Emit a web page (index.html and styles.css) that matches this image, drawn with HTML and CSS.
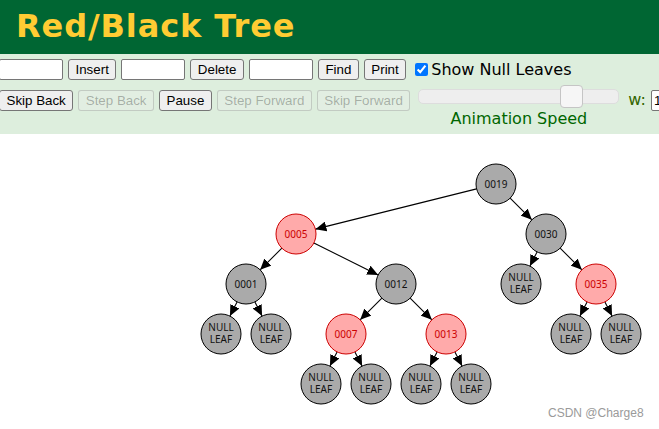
FILE: index.html
```html
<!DOCTYPE html>
<html>
<head>
<meta charset="utf-8">
<title>Red/Black Tree</title>
<link rel="stylesheet" href="styles.css">
</head>
<body>
<div class="header">Red/Black Tree</div>
<div class="controls">
  <div class="row row1">
    <input class="field" type="text">
    <button class="btn">Insert</button>
    <input class="field" type="text">
    <button class="btn">Delete</button>
    <input class="field" type="text">
    <button class="btn">Find</button>
    <button class="btn">Print</button>
    <label class="check"><input type="checkbox" checked><span>Show Null Leaves</span></label>
  </div>
  <div class="row row2">
    <button class="btn">Skip Back</button>
    <button class="btn" disabled>Step Back</button>
    <button class="btn">Pause</button>
    <button class="btn" disabled>Step Forward</button>
    <button class="btn" disabled>Skip Forward</button>
    <div class="speed">
      <div class="track"><div class="thumb"></div></div>
      <div class="speed-label">Animation Speed</div>
    </div>
    <span class="wlabel">w:</span>
    <input class="field wfield" type="text" value="1000">
  </div>
</div>
<svg class="canvas" width="659" height="295" viewBox="0 134 659 295" xmlns="http://www.w3.org/2000/svg">
  <defs>
    <marker id="arr" markerUnits="userSpaceOnUse" markerWidth="12" markerHeight="10" refX="11" refY="5" orient="auto">
      <path d="M0,0 L11,5 L0,10 z" fill="#000"/>
    </marker>
  </defs>
  <g class="edges" stroke="#000" stroke-width="1.1" marker-end="url(#arr)">
    <line x1="476.6" y1="188.85" x2="315.4" y2="229.15"/>
    <line x1="510.14" y1="198.14" x2="531.86" y2="219.86"/>
    <line x1="281.86" y1="248.14" x2="260.14" y2="269.86"/>
    <line x1="313.89" y1="242.94" x2="378.11" y2="275.06"/>
    <line x1="537.06" y1="251.89" x2="529.94" y2="266.11"/>
    <line x1="560.14" y1="248.14" x2="581.86" y2="269.86"/>
    <line x1="237.06" y1="301.89" x2="229.94" y2="316.11"/>
    <line x1="254.94" y1="301.89" x2="262.06" y2="316.11"/>
    <line x1="381.86" y1="298.14" x2="360.14" y2="319.86"/>
    <line x1="410.14" y1="298.14" x2="431.86" y2="319.86"/>
    <line x1="587.06" y1="301.89" x2="579.94" y2="316.11"/>
    <line x1="604.94" y1="301.89" x2="612.06" y2="316.11"/>
    <line x1="337.06" y1="351.89" x2="329.94" y2="366.11"/>
    <line x1="354.94" y1="351.89" x2="362.06" y2="366.11"/>
    <line x1="437.06" y1="351.89" x2="429.94" y2="366.11"/>
    <line x1="454.94" y1="351.89" x2="462.06" y2="366.11"/>
  </g>
  <g class="nodes">
    <g class="black"><circle cx="496" cy="184" r="20"/><text x="496" y="187.5">0019</text></g>
    <g class="red"><circle cx="296" cy="234" r="20"/><text x="296" y="237.5">0005</text></g>
    <g class="black"><circle cx="546" cy="234" r="20"/><text x="546" y="237.5">0030</text></g>
    <g class="black"><circle cx="246" cy="284" r="20"/><text x="246" y="287.5">0001</text></g>
    <g class="black"><circle cx="396" cy="284" r="20"/><text x="396" y="287.5">0012</text></g>
    <g class="black"><circle cx="521" cy="284" r="20"/><text x="521" y="281">NULL</text><text x="521" y="292.6">LEAF</text></g>
    <g class="red"><circle cx="596" cy="284" r="20"/><text x="596" y="287.5">0035</text></g>
    <g class="black"><circle cx="221" cy="334" r="20"/><text x="221" y="331">NULL</text><text x="221" y="342.6">LEAF</text></g>
    <g class="black"><circle cx="271" cy="334" r="20"/><text x="271" y="331">NULL</text><text x="271" y="342.6">LEAF</text></g>
    <g class="red"><circle cx="346" cy="334" r="20"/><text x="346" y="337.5">0007</text></g>
    <g class="red"><circle cx="446" cy="334" r="20"/><text x="446" y="337.5">0013</text></g>
    <g class="black"><circle cx="571" cy="334" r="20"/><text x="571" y="331">NULL</text><text x="571" y="342.6">LEAF</text></g>
    <g class="black"><circle cx="621" cy="334" r="20"/><text x="621" y="331">NULL</text><text x="621" y="342.6">LEAF</text></g>
    <g class="black"><circle cx="321" cy="384" r="20"/><text x="321" y="381">NULL</text><text x="321" y="392.6">LEAF</text></g>
    <g class="black"><circle cx="371" cy="384" r="20"/><text x="371" y="381">NULL</text><text x="371" y="392.6">LEAF</text></g>
    <g class="black"><circle cx="421" cy="384" r="20"/><text x="421" y="381">NULL</text><text x="421" y="392.6">LEAF</text></g>
    <g class="black"><circle cx="471" cy="384" r="20"/><text x="471" y="381">NULL</text><text x="471" y="392.6">LEAF</text></g>
  </g>
  <text class="watermark" x="548" y="417">CSDN @Charge8</text>
</svg>
</body>
</html>
```

FILE: styles.css
```css
html, body {
  margin: 0;
  padding: 0;
  background: #ffffff;
  overflow: hidden;
}
body {
  width: 659px;
  height: 429px;
  font-family: "DejaVu Sans", Verdana, sans-serif;
}
.header {
  height: 54px;
  line-height: 52px;
  background: #006633;
  color: #ffcc33;
  font-family: "DejaVu Sans", Verdana, sans-serif;
  font-weight: bold;
  font-size: 32px;
  padding-left: 16px;
  letter-spacing: 0.9px;
  white-space: nowrap;
}
.controls {
  background: #ddeedd;
  padding: 5px 0 6px 0;
  overflow: hidden;
}
.row {
  display: flex;
  gap: 5px;
  margin-left: -1px;
  white-space: nowrap;
}
.row1 {
  align-items: center;
  height: 21px;
}
.row2 {
  margin-top: 9px;
  align-items: flex-start;
}
.btn {
  font-family: "Liberation Sans", Arial, sans-serif;
  font-size: 13.333px;
  height: 21px;
  padding: 1px 6.5px;
  margin: 0;
  border: 1px solid #767676;
  border-radius: 3px;
  background: #efefef;
  color: #000;
  box-sizing: border-box;
  flex: none;
}
.btn:disabled {
  color: rgba(16, 16, 16, 0.3);
  background: rgba(239, 239, 239, 0.3);
  border-color: rgba(118, 118, 118, 0.3);
}
.row2 .btn {
  margin-top: 1px;
}
.field {
  width: 64px;
  height: 21px;
  box-sizing: border-box;
  border: 1px solid #767676;
  border-radius: 2px;
  background: #fff;
  margin: 0;
  padding: 1px 2px;
  font-family: "Liberation Sans", Arial, sans-serif;
  font-size: 13.333px;
  flex: none;
}
.check {
  display: flex;
  align-items: center;
  margin-left: 4px;
  font-size: 16px;
  color: #000;
  height: 21px;
}
.check input {
  width: 13px;
  height: 13px;
  margin: 0 3px 1px 0;
  accent-color: #0075ff;
}
.speed {
  display: flex;
  flex-direction: column;
  align-items: center;
  width: 201px;
  margin-left: 3px;
  flex: none;
}
.track {
  position: relative;
  width: 201px;
  height: 15px;
  box-sizing: border-box;
  background: #eeeeee;
  border: 1px solid #dddddd;
  border-radius: 5px;
}
.thumb {
  position: absolute;
  left: 141px;
  top: -5px;
  width: 23px;
  height: 23px;
  box-sizing: border-box;
  background: #f6f6f6;
  border: 1px solid #c5c5c5;
  border-radius: 4px;
}
.speed-label {
  margin-top: 5px;
  line-height: 19px;
  font-size: 16px;
  color: #006600;
}
.wlabel {
  margin-top: 1px;
  margin-left: 4px;
  line-height: 19px;
  font-size: 16px;
  color: #336600;
}
.wfield {
  margin-top: 1px;
  width: 50px;
}
.canvas {
  display: block;
}
.nodes text {
  font-family: "Noto Sans", "Open Sans", sans-serif;
  font-size: 10px;
  text-anchor: middle;
}
.black circle {
  fill: #aaaaaa;
  stroke: #000000;
  stroke-width: 1;
}
.black text {
  fill: #111111;
}
.red circle {
  fill: #ffaaaa;
  stroke: #cc0000;
  stroke-width: 1;
}
.red text {
  fill: #cc0000;
}
.watermark {
  font-family: "Liberation Sans", Arial, sans-serif;
  font-size: 12px;
  fill: #9a9a9a;
}
```
